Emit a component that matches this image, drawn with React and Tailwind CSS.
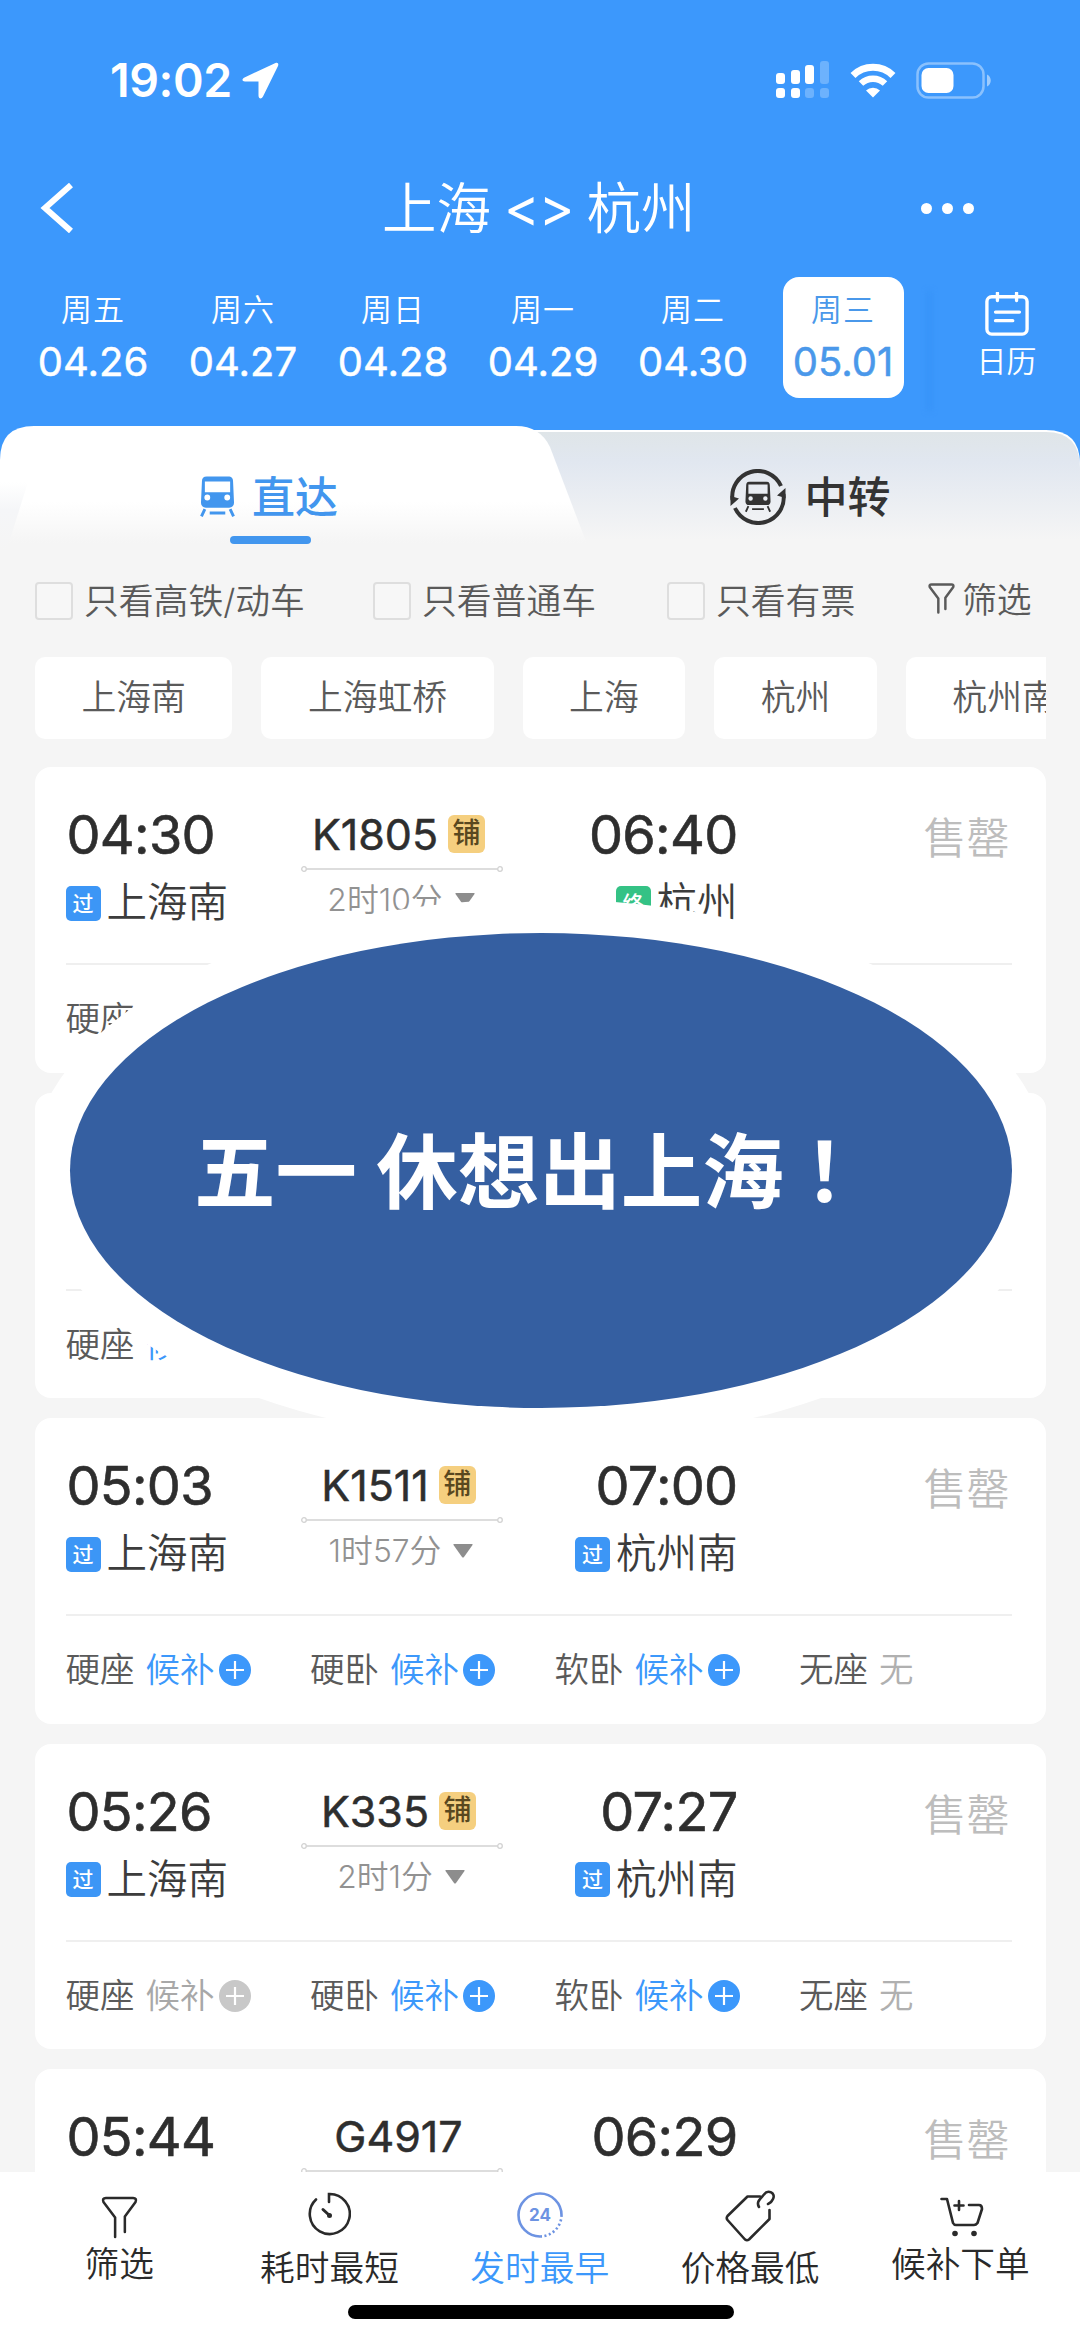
import React from 'react';

const days = [
  { week: '周五', date: '04.26' },
  { week: '周六', date: '04.27' },
  { week: '周日', date: '04.28' },
  { week: '周一', date: '04.29' },
  { week: '周二', date: '04.30' },
  { week: '周三', date: '05.01', active: true },
];

const stations = ['上海南', '上海虹桥', '上海', '杭州', '杭州南'];

const fullSeats = [
  { name: '硬座', state: 'wait' },
  { name: '硬卧', state: 'wait' },
  { name: '软卧', state: 'wait' },
  { name: '无座', state: 'none' },
];

const trains = [
  {
    id: 1,
    start: '04:30',
    end: '06:40',
    no: 'K1805',
    sleeper: true,
    duration: '2时10分',
    from: '上海南',
    to: '杭州',
    terminal: true,
    seats: [{ name: '硬座' }],
  },
  // header of this one sits fully under the banner
  { id: 2, seats: [{ name: '硬座', state: 'wait' }] },
  {
    id: 3,
    start: '05:03',
    end: '07:00',
    no: 'K1511',
    sleeper: true,
    duration: '1时57分',
    from: '上海南',
    to: '杭州南',
    seats: fullSeats,
  },
  {
    id: 4,
    start: '05:26',
    end: '07:27',
    no: 'K335',
    sleeper: true,
    duration: '2时1分',
    from: '上海南',
    to: '杭州南',
    seats: [{ name: '硬座', state: 'closed' }, ...fullSeats.slice(1)],
  },
  { id: 5, start: '05:44', end: '06:29', no: 'G4917', seats: [] },
];

const StatusBar = () => (
  <div className="h-[160px] shrink-0 flex items-center justify-between pl-[110px] pr-[88px]">
    <div className="flex items-center gap-[10px]">
      <span className="text-[46.500px] leading-[50px] font-semibold tracking-[-0.4px]">19:02</span>
      <svg className="w-[37px] h-[37px]" viewBox="0 0 37 37" fill="currentColor">
        <path d="M33.500 1 2.500 15.500c-3 1.500-2.500 4 .5 4h13.500v14c0 3.500 3 4 4.500 1L36 4c1-2.500-.5-4-2.500-3z" />
      </svg>
    </div>
    <div className="flex items-center gap-5">
      <svg className="w-[54px] h-[38px]" viewBox="0 0 54 38" fill="currentColor">
        <rect x="0" y="12" width="9" height="11" rx="3" />
        <rect x="15" y="9" width="9" height="14" rx="3" />
        <rect x="29" y="4" width="9" height="19" rx="3" />
        <rect x="44" y="0" width="9" height="23" rx="3" opacity=".25" />
        <rect x="0" y="27" width="9" height="10" rx="3" />
        <rect x="15" y="27" width="9" height="10" rx="3" />
        <rect x="29" y="27" width="9" height="10" rx="3" opacity=".25" />
        <rect x="44" y="27" width="9" height="10" rx="3" opacity=".25" />
      </svg>
      <svg className="w-[46px] h-[35px]" viewBox="0 0 46 35">
        <path d="M3 12.500a28.500 28.500 0 0 1 40 0" fill="none" stroke="currentColor" strokeWidth="7" />
        <path d="M11 20.500a17.500 17.500 0 0 1 24 0" fill="none" stroke="currentColor" strokeWidth="6.500" />
        <path d="M23 34.500 16 27.500a10 10 0 0 1 14 0z" fill="currentColor" />
      </svg>
      <svg className="w-[76px] h-[37px]" viewBox="0 0 76 37">
        <rect x="1.500" y="1.500" width="66" height="34" rx="11" fill="none" stroke="currentColor" strokeWidth="2.500" opacity=".4" />
        <rect x="5.500" y="6" width="32" height="25" rx="7" fill="currentColor" />
        <path d="M71 12.500c5 2 5 10 0 12z" fill="currentColor" opacity=".5" />
      </svg>
    </div>
  </div>
);

const TitleBar = () => (
  <div className="h-[96px] shrink-0 flex items-center pl-[40px] pr-[106px]">
    <svg className="w-[34px] h-[50px]" viewBox="0 0 34 50" fill="none" stroke="currentColor" strokeWidth="6">
      <path d="M31 2 5 25l26 23" />
    </svg>
    <h1 className="ml-[308px] flex items-center text-[54.500px] leading-[60px] font-[350]">
      上海<span className="mx-[13px] text-[54px] tracking-[-1px] font-normal">&lt;&gt;</span>杭州
    </h1>
    <div className="ml-auto flex gap-[10px]">
      <span className="size-[11px] rounded-full bg-white" />
      <span className="size-[11px] rounded-full bg-white" />
      <span className="size-[11px] rounded-full bg-white" />
    </div>
  </div>
);

const DateBar = () => (
  <div className="h-[170px] shrink-0 flex items-start pl-[18px] pt-[21px]">
    {days.map((d) => (
      <div key={d.date} className="w-[150px] flex justify-center">
        <div
          className={`w-[121px] h-[121px] rounded-2xl flex flex-col items-center pt-[13px] ${
            d.active ? 'bg-white text-[#4a98ea]' : ''
          }`}
        >
          <span className="text-[31px] leading-[40px] font-[350] tracking-[1px]">{d.week}</span>
          <span className="mt-[8px] text-[40px] leading-[48px] font-normal [-webkit-text-stroke:0.5px_currentColor]">{d.date}</span>
        </div>
      </div>
    ))}
    <div className="w-[3px] h-[120px] mt-[14px] ml-[10px] bg-[#3390f6] blur-[3px]" />
    <div className="flex-1 flex flex-col items-center pt-[15px] pl-[2px]">
      <svg className="w-[44px] h-[44px]" viewBox="0 0 46 46" fill="none" stroke="currentColor" strokeWidth="3.500">
        <rect x="2" y="5" width="42" height="39" rx="5" />
        <path d="M13 1v8M33 1v8M11 21h25M11 30h18" strokeLinecap="round" />
      </svg>
      <span className="mt-[5px] text-[30px] leading-[40px] font-[350]">日历</span>
    </div>
  </div>
);

const TrainIcon = ({ className }) => (
  <svg className={className} viewBox="0 0 36 42">
    <path
      fill="currentColor"
      fillRule="evenodd"
      d="M7 0h22c3.500 0 5 2 5 5l1 22c0 3-2 5-5 5H6c-3 0-5-2-5-5L2 5c0-3 1.500-5 5-5zM5 5v11h26V5zM7.500 18.500a3 3 0 1 0 0 6 3 3 0 0 0 0-6zm20.500 0a3 3 0 1 0 0 6 3 3 0 0 0 0-6z"
    />
    <path d="M5 33.500 1.500 41M31 33.500 34.500 41M10 37.500h16" fill="none" stroke="currentColor" strokeWidth="3" />
  </svg>
);

const TransferIcon = () => (
  <svg className="w-[56px] h-[56px]" viewBox="0 0 56 56">
    <g fill="none" stroke="currentColor" strokeWidth="4">
      <path d="M2.500 31A25.500 25.500 0 0 1 51 17" />
      <path d="M53.500 25A25.500 25.500 0 0 1 5 39" />
    </g>
    <path d="M.5 27v10l8.500-7.500zM55.500 29v-10l-8.500 7.500z" fill="currentColor" />
    <svg x="14.500" y="12.500" width="27" height="31" viewBox="0 0 36 42">
      <path
        fill="currentColor"
        fillRule="evenodd"
        d="M7 0h22c3.500 0 5 2 5 5l1 22c0 3-2 5-5 5H6c-3 0-5-2-5-5L2 5c0-3 1.500-5 5-5zM5 4v12.500h26V4zM8 20a3 3 0 1 0 0 6 3 3 0 0 0 0-6zm20 0a3 3 0 1 0 0 6 3 3 0 0 0 0-6z"
      />
      <path d="M5 33.500 1.500 41M31 33.500 34.500 41M10 37.500h16" fill="none" stroke="currentColor" strokeWidth="2.500" />
    </svg>
  </svg>
);

const Tabs = () => (
  <div className="relative h-[126px] shrink-0 flex">
    {/* slanted tab shapes */}
    <svg className="absolute inset-0 w-[1080px] h-[126px]" viewBox="0 0 1080 126">
      <defs>
        <linearGradient id="idle" x1="0" y1="0" x2="0" y2="1">
          <stop offset="0" stopColor="#dfe5e8" />
          <stop offset=".25" stopColor="#e1e7f0" />
          <stop offset=".9" stopColor="#f5f5f5" />
        </linearGradient>
        <linearGradient id="active" gradientUnits="userSpaceOnUse" x1="0" y1="0" x2="0" y2="126">
          <stop offset=".6" stopColor="#ffffff" />
          <stop offset=".93" stopColor="#f5f5f5" />
        </linearGradient>
        <linearGradient id="edge" x1="0" y1="0" x2="0" y2="1">
          <stop offset="0" stopColor="#ffffff" />
          <stop offset=".4" stopColor="#f5f6f8" />
          <stop offset="1" stopColor="#f5f5f5" />
        </linearGradient>
      </defs>
      <path d="M300 126V4H1046Q1080 4 1080 38V126z" fill="#fff" />
      <path d="M300 126V6H1046Q1080 6 1080 42V126z" fill="url(#idle)" />
      <path d="M0 126V34Q0 0 34 0H516Q540 0 550 21L590 126z" fill="url(#active)" />
      <path d="M0 126V56H28L6 126z" fill="url(#edge)" />
    </svg>
    <div className="relative w-[540px] flex flex-col items-center text-[#4296ee]">
      <div className="mt-[48px] flex items-center gap-[17px] pr-[2px] leading-[46px]">
        <TrainIcon className="w-[35px] h-[42px]" />
        <span className="text-[43px] font-medium">直达</span>
      </div>
      <div className="mt-[16px] w-[81px] h-[8px] rounded-full bg-[#4296ee]" />
    </div>
    <div className="relative w-[540px] flex items-start justify-center text-[#333]">
      <div className="mt-[43px] flex items-center gap-[19px] leading-[56px]">
        <TransferIcon />
        <span className="text-[43px] font-medium">中转</span>
      </div>
    </div>
  </div>
);

const FunnelIcon = ({ className, width }) => (
  <svg className={className} viewBox="0 0 38 44" fill="none" stroke="currentColor" strokeWidth={width} strokeLinecap="round" strokeLinejoin="round">
    <path d="M14.500 42V22L2.500 6Q1 2 5 2H33Q37 2 35.500 6L24.500 21V37" />
  </svg>
);

const CheckItem = ({ label, className }) => (
  <label className={`flex items-center gap-[11px] ${className}`}>
    <span className="w-[38px] h-[38px] rounded-[4px] border-2 border-[#dedede] bg-[#f7f7f7]" />
    {label}
  </label>
);

const Filters = () => (
  <div className="shrink-0 pl-[35px] pr-[34px] text-[34.800px] font-[350] text-[#5a5a5a]">
    <div className="h-[97px] flex items-center leading-[38px]">
      <CheckItem label="只看高铁/动车" className="w-[338px]" />
      <CheckItem label="只看普通车" className="w-[294px]" />
      <CheckItem label="只看有票" className="w-[261px]" />
      <div className="-mt-[2px] flex items-center gap-[7px] whitespace-nowrap">
        <FunnelIcon className="w-[27px] h-[31px] -mt-[3px]" width="3.500" />
        筛选
      </div>
    </div>
    <div className="mt-[8px] flex gap-[29px] overflow-hidden">
      {stations.map((s) => (
        <div key={s} className="shrink-0 h-[82px] px-[46.500px] rounded-[10px] bg-white leading-[80px]">
          {s}
        </div>
      ))}
    </div>
  </div>
);

const StopBadge = ({ terminal }) => (
  <span
    className={`size-[35px] rounded-[5px] text-white text-[21px] leading-[35px] font-medium text-center ${
      terminal ? 'bg-[#34c285]' : 'bg-[#3c96f6]'
    }`}
  >
    {terminal ? '终' : '过'}
  </span>
);

const Stop = ({ name, terminal }) => (
  <div className="mt-[14px] flex items-center gap-[6px] text-[40.500px] leading-[48px] font-[350] text-[#3c3c3c]">
    <StopBadge terminal={terminal} />
    {name}
  </div>
);

const Time = ({ children }) => (
  <div className="text-[54px] leading-[60px] tracking-[-0.700px] text-[#2e2e2e] [-webkit-text-stroke:0.6px_currentColor]">
    {children}
  </div>
);

const Seat = ({ name, state }) => (
  <div className="w-[244.500px] shrink-0 flex items-center text-[34.500px] font-[350] text-[#5a5a5a]">
    {name}
    {state === 'none' && <span className="ml-[11px] text-[#b0b0b0]">无</span>}
    {(state === 'wait' || state === 'closed') && (
      <>
        <span className={`ml-[11px] ${state === 'wait' ? 'text-[#3c98fb]' : 'text-[#a8a8a8]'}`}>候补</span>
        <svg
          className={`ml-[4px] size-[32px] ${state === 'wait' ? 'text-[#3c98fb]' : 'text-[#c8c8c8]'}`}
          viewBox="0 0 32 32"
        >
          <circle cx="16" cy="16" r="16" fill="currentColor" />
          <path d="M7 16h18M16 7v18" stroke="#fff" strokeWidth="2.200" />
        </svg>
      </>
    )}
  </div>
);

const TrainCard = ({ train }) => (
  <div className="h-[305.500px] shrink-0 rounded-2xl bg-white pl-[31px] pr-[34px] flex flex-col">
    <div className="h-[198px] shrink-0 flex border-b-2 border-[#efefef]">
      {train.start && (
        <>
          <div className="w-[206px] pt-[38px]">
            <div className="pl-[1px]">
              <Time>{train.start}</Time>
            </div>
            {train.from && <Stop name={train.from} />}
          </div>
          <div className="w-[260px] pt-[42px] flex flex-col items-center">
            <div className="pr-[6px] flex items-center gap-[10px] text-[43px] leading-[50px] text-[#2e2e2e]">
              <span className="[-webkit-text-stroke:0.5px_currentColor]">{train.no}</span>
              {train.sleeper && (
                <span className="w-[37px] h-[38px] rounded-[6px] bg-[#f5cf7f] text-[28px] leading-[37px] text-center font-medium text-[#59481f]">
                  铺
                </span>
              )}
            </div>
            <svg className="mt-[7px] w-[202px] h-[6px] shrink-0" viewBox="0 0 202 6" fill="none" stroke="#d2d2d2" strokeWidth="1.300">
              <path d="M5.500 3h191" />
              <circle cx="3" cy="3" r="2.300" />
              <circle cx="199" cy="3" r="2.300" />
            </svg>
            {train.duration && (
              <div className="mt-[6px] flex items-center gap-[12px] pr-[1px] text-[31.800px] leading-[44px] font-[350] text-[#929292]">
                {train.duration}
                <svg className="w-[20px] h-[14px]" viewBox="0 0 20 14" fill="#8d8d8d">
                  <path d="M1 0H19Q20 0 19.500 1L11 13Q10 14 9 13L.5 1Q0 0 1 0z" />
                </svg>
              </div>
            )}
          </div>
          <div className="w-[207px] pt-[38px] pr-[1px] flex flex-col items-end">
            <Time>{train.end}</Time>
            {train.to && <Stop name={train.to} terminal={train.terminal} />}
          </div>
          <div className="flex-1 pt-[43px] pr-[2px] text-right text-[43px] leading-[56px] font-[350] text-[#bdbdbd]">售罄</div>
        </>
      )}
    </div>
    <div className="flex-1 flex items-center pt-[1px]">
      {train.seats.map((s) => (
        <Seat key={s.name} {...s} />
      ))}
    </div>
  </div>
);

const ClockIcon = () => (
  <svg className="w-[44px] h-[44px]" viewBox="0 0 44 44" fill="none" stroke="currentColor" strokeWidth="2.600" strokeLinecap="round">
    <path d="M22 10V2A20 20 0 1 1 9 7.500" />
    <path d="M16 17.500 22 23" strokeWidth="3" />
    <circle cx="22.500" cy="23.500" r="1.200" />
  </svg>
);

const DepartIcon = () => (
  <svg className="w-[48px] h-[46px]" viewBox="0 0 48 46" fill="none" stroke="#6d93e2" strokeWidth="2.600">
    <path d="M24 44.500A21.500 21.500 0 1 1 45.500 23" />
    <path d="M45.500 23A21.500 21.500 0 0 1 24 44.500" strokeDasharray="2 2.500" />
    <text x="24" y="29" textAnchor="middle" fontSize="17" fontWeight="700" fill="#6d93e2" stroke="none">24</text>
  </svg>
);

const TagIcon = () => (
  <svg className="w-[50px] h-[52px]" viewBox="0 0 50 52" fill="none" stroke="currentColor" strokeWidth="2.600" strokeLinecap="round" strokeLinejoin="round">
    <path d="M35 6.500H22.500L2.500 26Q1 28 2.500 30L20 49.500Q22 51 24 49.500L44.500 29V20" />
    <path d="M34 17C31 12 35 9 39 4.500 43-1 51 3 48 9Q46 13 43 14" />
  </svg>
);

const CartIcon = () => (
  <svg className="w-[44px] h-[40px]" viewBox="0 0 44 40" fill="none" stroke="currentColor" strokeWidth="2.600" strokeLinecap="round" strokeLinejoin="round">
    <path d="M1.500 2H7L13 26Q14 28 16 28H34Q36 28 37.500 26L42 12Q42 8 39 8H29M19 4v9M14.500 8.500h9" />
    <circle cx="15" cy="36.500" r="2.800" fill="currentColor" stroke="none" />
    <circle cx="34" cy="36.500" r="2.800" fill="currentColor" stroke="none" />
  </svg>
);

const BottomItem = ({ icon, label, className }) => (
  <div className={`w-[210.300px] flex flex-col items-center ${className}`}>
    <div className="h-[52px] flex items-center">{icon}</div>
    <span className="-mt-[3px] text-[34.700px] leading-[48px] font-[350]">{label}</span>
  </div>
);

const BottomBar = () => (
  <div className="h-[169px] shrink-0 bg-white text-[#2a2a2a]">
    <div className="h-[133px] pl-[14px] pt-[16px] flex">
      <BottomItem label="筛选" className="pt-[3px]" icon={<FunnelIcon className="w-[37px] h-[43px]" width="2.600" />} />
      <BottomItem label="耗时最短" className="pt-[7px]" icon={<div className="pb-[14px]"><ClockIcon /></div>} />
      <BottomItem label="发时最早" className="pt-[7px] text-[#3c98fb]" icon={<div className="pb-[13px]"><DepartIcon /></div>} />
      <BottomItem label="价格最低" className="pt-[7px]" icon={<div className="pb-[11px]"><TagIcon /></div>} />
      <BottomItem label="候补下单" className="pt-[3px]" icon={<div className="pl-[4px]"><CartIcon /></div>} />
    </div>
    <div className="ml-[348px] w-[386px] h-[14px] rounded-full bg-black" />
  </div>
);

const App = () => {
  return (
    <div className="relative w-[1080px] h-[2341px] overflow-hidden flex flex-col bg-[#f5f5f5] font-['Inter','Noto_Sans_CJK_SC',sans-serif]">
      <div className="h-[470px] -mb-[44px] shrink-0 bg-[#3c98fc] text-white flex flex-col">
        <StatusBar />
        <TitleBar />
        <DateBar />
      </div>
      <Tabs />
      <Filters />
      <div className="flex-1 min-h-0 overflow-hidden mt-[28px] px-[34.500px] flex flex-col gap-5">
        {trains.map((t) => (
          <TrainCard key={t.id} train={t} />
        ))}
      </div>
      <BottomBar />

      {/* banner with its white halo, the halo never leaves the cards' column */}
      <div className="absolute left-[34.500px] top-[899px] w-[1011px] h-[544px] overflow-hidden">
        <div className="-ml-[4.500px] w-[1020px] h-[544px] rounded-[50%] bg-white" />
      </div>
      <div className="absolute left-[70px] top-[933px] w-[942px] h-[475px] rounded-[50%] bg-[#355fa1] flex items-center pl-[124px] pt-[6px] text-[81.500px] font-bold text-white whitespace-nowrap">
        五一 休想出上海<span className="-mt-[14px] font-['Noto_Sans_CJK_TC']">！</span>
      </div>
    </div>
  );
};

export default App;
